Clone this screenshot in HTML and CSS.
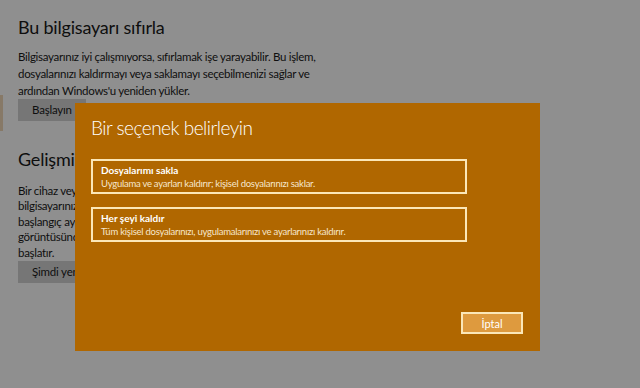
FILE: index.html
```html
<!doctype html>
<html lang="tr">
<head>
<meta charset="UTF-8">
<title>Bu bilgisayarı sıfırla</title>
<link rel="stylesheet" href="styles.css">
</head>
<body>
<div id="page">
<span class="nav-mark"></span>
<h2>Bu bilgisayarı sıfırla</h2>
<p>Bilgisayarınız iyi çalışmıyorsa, sıfırlamak işe yarayabilir. Bu işlem,<br>dosyalarınızı kaldırmayı veya saklamayı seçebilmenizi sağlar ve<br>ardından Windows'u yeniden yükler.</p>
<button class="page-btn">Başlayın</button>
<h2 class="second">Gelişmiş başlangıç</h2>
<p class="tight">Bir cihaz veya diskten (USB sürücü ya da DVD gibi) başlatın,<br>bilgisayarınızın bellenim ayarlarını değiştirin, Windows<br>başlangıç ayarlarını değiştirin veya Windows'u sistem<br>görüntüsünden geri yükleyin. Bu işlem bilgisayarınızı yeniden<br>başlatır.</p>
<button class="page-btn">Şimdi yeniden başlat</button>
</div>
<div id="shade"></div>
<div id="dialog">
<h1>Bir seçenek belirleyin</h1>
<div class="option">
<div class="opt-title">Dosyalarımı sakla</div>
<div class="opt-text">Uygulama ve ayarları kaldırır; kişisel dosyalarınızı saklar.</div>
</div>
<div class="option">
<div class="opt-title">Her şeyi kaldır</div>
<div class="opt-text">Tüm kişisel dosyalarınızı, uygulamalarınızı ve ayarlarınızı kaldırır.</div>
</div>
<div class="dialog-foot">
<button id="cancel">İptal</button>
</div>
</div>
</body>
</html>
```

FILE: styles.css
```css
body {
font-family: Lato, "Noto Sans", sans-serif;
margin: 0;
background-color: #fff;
color: #1a1a1a;
width: 640px;
height: 388px;
overflow: hidden;
position: relative;
}
#page {
padding: 15px 18px 0 18px;
position: relative;
}
.nav-mark {
position: absolute;
left: 0;
top: 95px;
width: 3px;
height: 36px;
background-color: #f0d8b8;
}
h2 {
font-family: Lato, sans-serif;
font-weight: 400;
font-size: 18px;
letter-spacing: -0.2px;
line-height: 24px;
margin: 0 0 9px 0;
}
h2.second {
margin-top: 26px;
margin-bottom: 12px;
}
p {
font-size: 11.5px;
letter-spacing: -0.3px;
line-height: 17px;
margin: 0 0 -1px 0;
white-space: nowrap;
}
p.tight {
line-height: 15.5px;
margin-bottom: 0;
}
.page-btn {
font-family: Lato, sans-serif;
font-size: 11.5px;
letter-spacing: -0.2px;
background-color: #d2d2d2;
color: #1a1a1a;
border: none;
padding: 0 14px;
height: 22px;
min-width: 62px;
}
#shade {
position: absolute;
left: 0;
top: 0;
width: 640px;
height: 388px;
background-color: rgba(0, 0, 0, 0.44);
}
#dialog {
position: absolute;
left: 75px;
top: 103px;
width: 465px;
height: 248px;
box-sizing: border-box;
padding: 12px 73px 0 16px;
background-color: #b06700;
color: #fff;
display: flex;
flex-direction: column;
}
#dialog h1 {
font-family: Lato, sans-serif;
font-weight: 300;
font-size: 19px;
letter-spacing: -0.5px;
margin: 0 0 18px 0;
line-height: 26px;
}
.option {
border: 2px solid #fbe7b8;
height: 35px;
box-sizing: border-box;
padding: 2px 8px 0 8px;
margin-bottom: 13px;
}
.opt-title {
font-weight: 700;
font-size: 10px;
line-height: 14px;
}
.opt-text {
font-size: 9.5px;
letter-spacing: -0.25px;
line-height: 13px;
color: #f6e6cc;
}
.dialog-foot {
display: flex;
justify-content: flex-end;
margin-top: auto;
margin-bottom: 17px;
margin-right: -56px;
}
#cancel {
font-family: Lato, sans-serif;
width: 62px;
height: 22px;
font-size: 11px;
color: #fff;
background-color: #de9a3e;
border: 2px solid #fbe7b8;
padding: 0;
}
```
